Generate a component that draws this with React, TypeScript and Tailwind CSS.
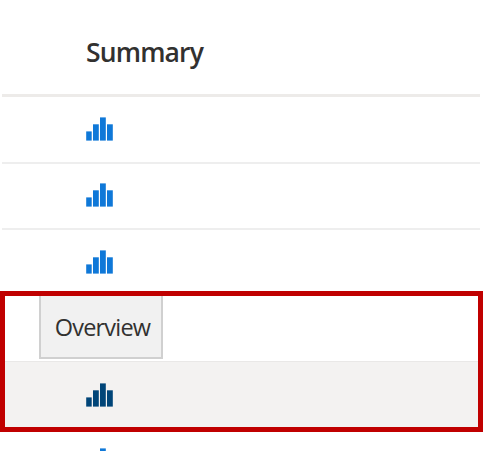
function Bars({ color, className = '' }: { color: string; className?: string }) {
  return (
    <svg width="27" height="24" viewBox="0 0 27 24" fill={color} className={`block shrink-0 ${className}`} aria-hidden="true">
      <rect x="0.2" y="14.4" width="5.5" height="9.2" />
      <rect x="7" y="7.3" width="5.8" height="16.3" />
      <rect x="14" y="0.4" width="5.8" height="23.2" />
      <rect x="21" y="7.3" width="5.8" height="16.3" />
    </svg>
  );
}

export default function App() {
  return (
    <main className="flex h-[451px] w-[483px] flex-col overflow-hidden bg-white font-['Open_Sans','Noto_Sans',sans-serif]">
      <header className="mr-[3px] ml-0.5 h-[97px] shrink-0 border-b-[3px] border-[#edebe9] pt-[33px] pl-[84px]">
        <h1 className="text-[26.5px] leading-[39px] font-semibold tracking-[-0.85px] text-[#323130]">Summary</h1>
      </header>
      <div className="mr-[3px] ml-0.5 h-[67px] shrink-0 border-b-2 border-[#eeeeee] pt-5 pl-[84px]">
        <Bars color="#0f78d8" />
      </div>
      <div className="mr-[3px] ml-0.5 h-[66px] shrink-0 border-b-2 border-[#eeeeee] pt-[19px] pl-[84px]">
        <Bars color="#0f78d8" />
      </div>
      <div className="mr-[3px] ml-0.5 h-[61px] shrink-0 pt-5 pl-[84px]">
        <Bars color="#0f78d8" />
      </div>
      <section className="flex h-[141px] shrink-0 flex-col border-5 border-[#c00000]">
        <div className="h-[65px] shrink-0 pl-[34px]">
          <div className="flex h-[63px] w-[124px] items-center justify-center border-2 border-t-0 border-[#d0d0d0] bg-[#f1f1f1] pl-[3px]">
            <span className="text-[23.5px] leading-[30px] tracking-[-0.8px] text-[#323130]">Overview</span>
          </div>
        </div>
        <div className="grow border-t border-[#e9e8e7] bg-[#f3f2f1] pt-[21px] pl-[81px]">
          <Bars color="#004578" />
        </div>
      </section>
      <div className="shrink-0 pt-4 pl-[86px]">
        <Bars color="#0f78d8" />
      </div>
    </main>
  );
}
